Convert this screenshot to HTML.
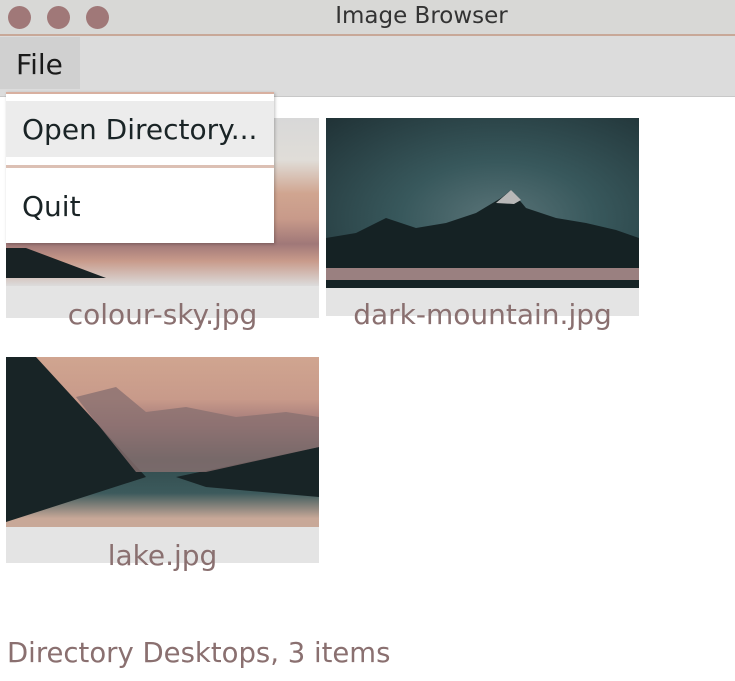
<!DOCTYPE html>
<html><head><style>
body{margin:0;width:735px;height:681px;background:#fff;position:relative;overflow:hidden;font-family:"DejaVu Sans","Liberation Sans",sans-serif;}
.abs{position:absolute}
.dot{position:absolute;top:6px;width:23px;height:23px;border-radius:50%;background:#a07878}
.lbl{position:absolute;left:0;width:100%;text-align:center;color:#8a7070;font-size:28px;white-space:nowrap}
</style></head><body>
<div class="abs" style="left:0;top:0;width:735px;height:34px;background:#d8d8d6"></div>
<div class="dot" style="left:8px"></div><div class="dot" style="left:47px"></div><div class="dot" style="left:86px"></div>
<div class="abs" style="left:0;top:3px;width:843px;text-align:center;font-size:23px;color:#333">Image Browser</div>
<div class="abs" style="left:0;top:34px;width:735px;height:2px;background:#c8a898"></div>
<div class="abs" style="left:0;top:36px;width:735px;height:60px;background:#dcdcdc;border-bottom:1px solid #c8c8c8"></div>
<div class="abs" style="left:0;top:37px;width:80px;height:52px;background:#d0d0d0"></div>
<div class="abs" style="left:16px;top:48px;font-size:28px;color:#1a1a1a">File</div>

<div class="abs" style="left:6px;top:118px;width:313px;height:200px;background:#e4e4e4">
<div class="abs" style="left:0;top:0;width:313px;height:168px;background:linear-gradient(#d8d8d8 0%,#e0ddd8 25%,#d0a590 45%,#c89a8a 60%,#a07878 75%,#c89a8a 85%,#dcdcdc 100%)"></div>
<div class="abs" style="left:0;top:130px;width:100px;height:30px;background:#182224;clip-path:polygon(0 0,20% 0,100% 100%,0 100%)"></div>
<div class="lbl" style="top:180px">colour-sky.jpg</div></div>
<div class="abs" style="left:326px;top:118px;width:313px;height:198px;background:#e4e4e4">
<div class="abs" style="left:0;top:0;width:313px;height:168px;background:radial-gradient(ellipse at 55% 60%,#5a7478 0%,#38585c 40%,#203236 100%)"></div>
<svg class="abs" style="left:0;top:0" width="313" height="170"><polygon points="0,120 30,115 60,100 90,110 120,105 150,95 175,80 185,72 200,90 230,100 260,105 290,112 313,120 313,170 0,170" fill="#152224"/><polygon points="170,85 185,72 195,82 188,86" fill="#b8b8b8"/><rect x="0" y="150" width="313" height="12" fill="#9a8080"/></svg>
<div class="lbl" style="top:180px">dark-mountain.jpg</div></div>
<div class="abs" style="left:6px;top:357px;width:313px;height:206px;background:#e4e4e4">
<div class="abs" style="left:0;top:0;width:313px;height:170px;background:linear-gradient(#d0a590 0%,#c89a8a 25%,#a07878 40%,#304a4c 60%,#3c5a5c 80%,#c8a898 95%)"></div>
<svg class="abs" style="left:0;top:0" width="313" height="175"><polygon points="0,0 30,0 140,120 0,165" fill="#182426"/><polygon points="170,120 313,90 313,140 200,130" fill="#182426"/><polygon points="70,40 110,30 140,55 180,50 230,60 280,55 313,60 313,90 200,115 130,115" fill="#8a7070" opacity=".8"/></svg>
<div class="lbl" style="top:182px">lake.jpg</div></div>

<div class="abs" style="left:6px;top:92px;width:268px;height:149px;background:#fff;box-shadow:1px 1px 3px rgba(0,0,0,.25);border-top:2px solid #d8b0a0"></div>
<div class="abs" style="left:6px;top:101px;width:268px;height:56px;background:#ececec"></div>
<div class="abs" style="left:22px;top:113px;font-size:28px;color:#1a2426">Open Directory...</div>
<div class="abs" style="left:6px;top:165px;width:268px;height:3px;background:#dcc0b4"></div>
<div class="abs" style="left:22px;top:190px;font-size:28px;color:#1a2426">Quit</div>

<div class="abs" style="left:7px;top:637px;font-size:27.5px;color:#8a7070">Directory Desktops, 3 items</div>
</body></html>
